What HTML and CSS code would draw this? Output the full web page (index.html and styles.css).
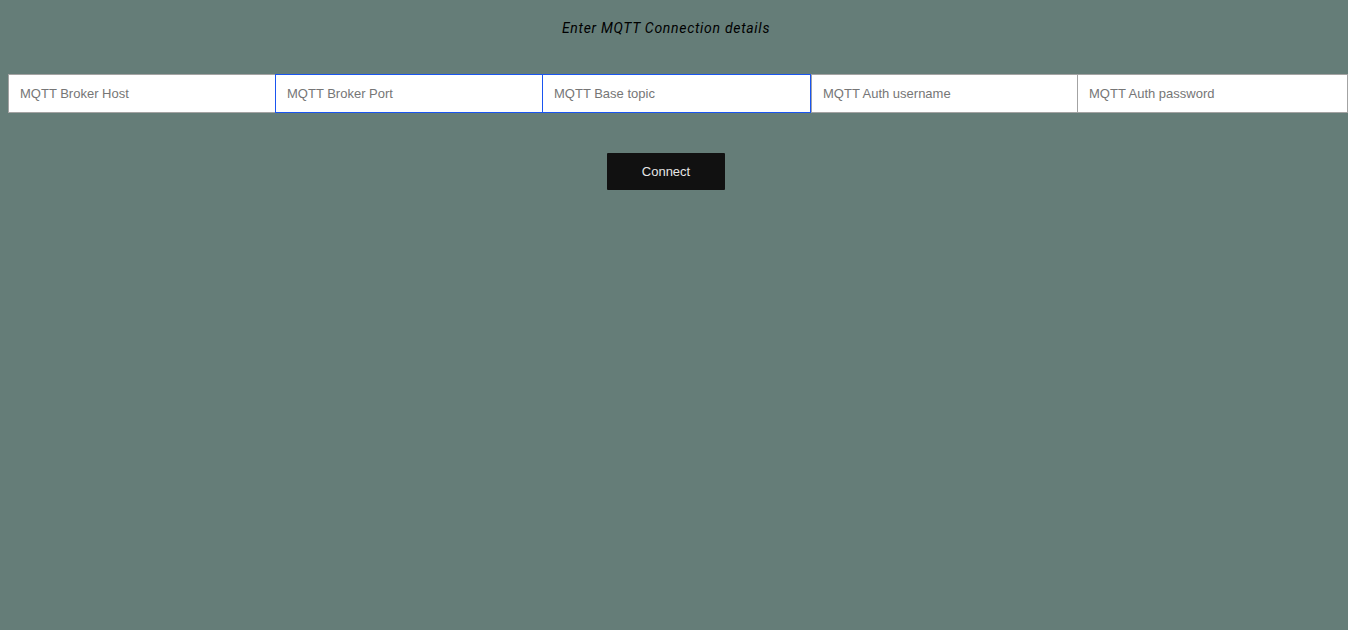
FILE: index.html
```html
<!DOCTYPE html>
<html>
<head>
<meta charset="utf-8">
<link rel="stylesheet" href="styles.css">
</head>
<body>
<main class="page">
  <p class="title">Enter MQTT Connection details</p>
  <div class="fields">
    <input class="field host" type="text" placeholder="MQTT Broker Host">
    <input class="field port active" type="text" placeholder="MQTT Broker Port">
    <input class="field topic active" type="text" placeholder="MQTT Base topic">
    <input class="field user" type="text" placeholder="MQTT Auth username">
    <input class="field pass" type="password" placeholder="MQTT Auth password">
  </div>
  <div class="actions">
    <button class="connect" type="button">Connect</button>
  </div>
</main>
</body>
</html>
```
FILE: styles.css
```css
html, body {
  margin: 0;
  padding: 0;
  background: #657d78;
  overflow: hidden;
}
.page {
  width: 1332px;
  padding-top: 20px;
}
.title {
  margin: 0;
  text-align: center;
  font-family: Roboto, "Liberation Sans", sans-serif;
  font-style: italic;
  font-size: 14px;
  line-height: 16px;
  letter-spacing: 0.7px;
  color: #000;
}
.fields {
  display: flex;
  margin: 38px 0 0 8px;
  width: 1340px;
}
.field {
  min-width: 0;
  height: 39px;
  box-sizing: border-box;
  margin: 0 0 0 -1px;
  padding: 0 11px;
  border: 1px solid #a3a3a3;
  border-radius: 0;
  background: #fff;
  font-family: "Liberation Sans", Arial, sans-serif;
  font-size: 13px;
  color: #333;
  outline: none;
}
.field.host { flex: 0 0 268px; margin-left: 0; }
.field.port { flex: 0 0 268px; }
.field.topic { flex: 0 0 269px; }
.field.user { flex: 0 0 267px; margin-left: 0; }
.field.pass { flex: 1 1 0; }
.field::placeholder {
  color: #767676;
}
.field.active {
  border-color: #1a55f0;
  position: relative;
  z-index: 1;
}
.actions {
  display: flex;
  justify-content: center;
  margin-top: 40px;
}
.connect {
  width: 118px;
  height: 37px;
  border: none;
  border-radius: 1px;
  background: #111111;
  color: #e6e6e6;
  font-family: "Liberation Sans", Arial, sans-serif;
  font-size: 13px;
  padding: 0;
}
```
